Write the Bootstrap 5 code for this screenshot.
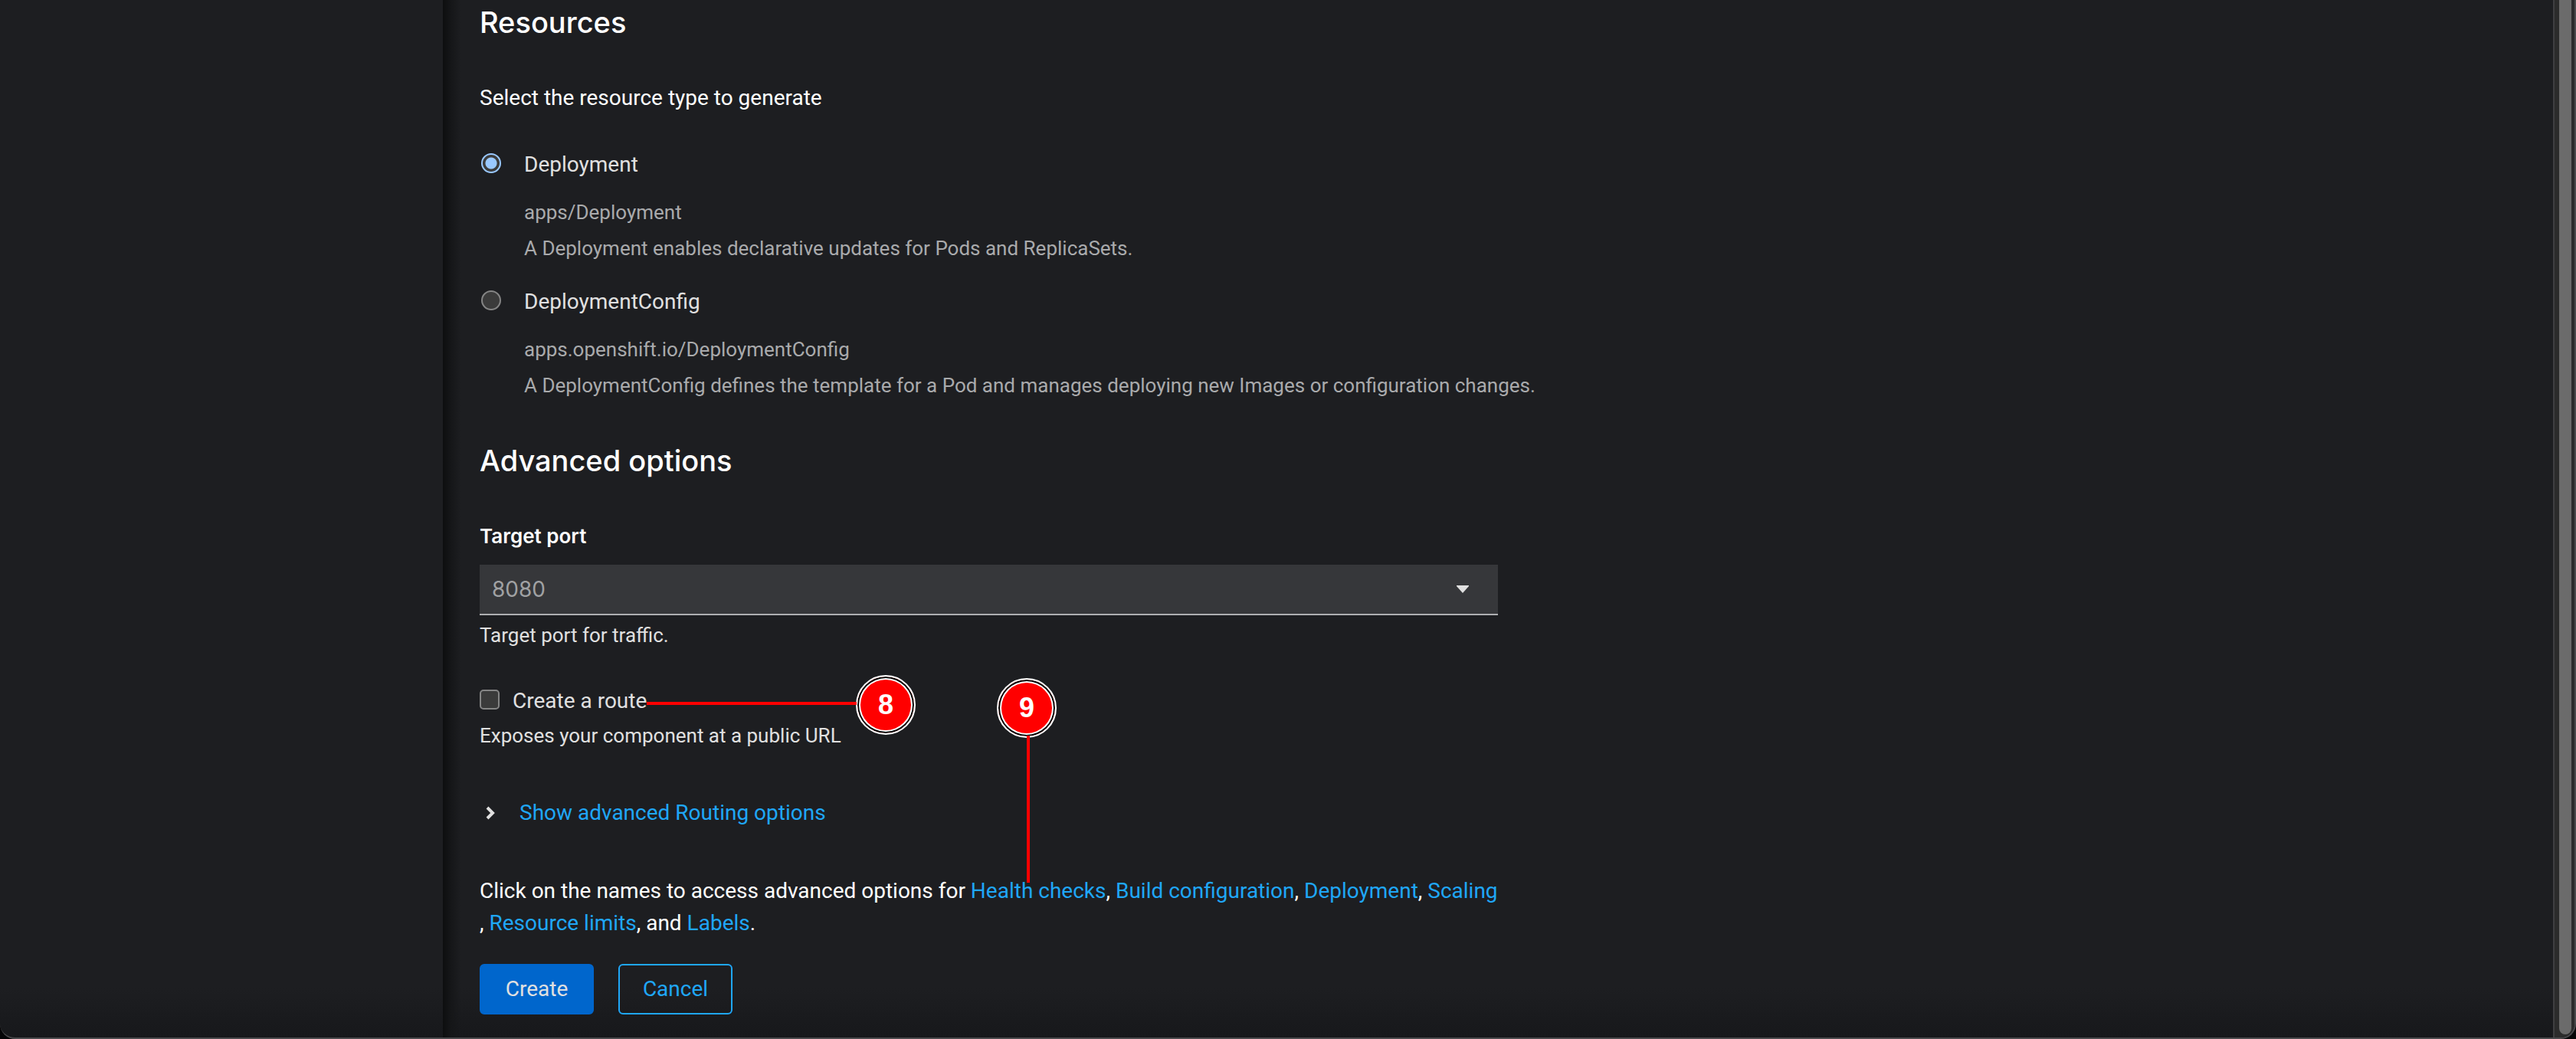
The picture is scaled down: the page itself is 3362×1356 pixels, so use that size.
<!DOCTYPE html>
<html lang="en" data-bs-theme="dark">
<head>
<meta charset="utf-8">
<meta name="viewport" content="width=device-width, initial-scale=1">
<title>Resources and advanced options</title>
<link href="https://cdn.jsdelivr.net/npm/bootstrap@5.3.0/dist/css/bootstrap.min.css" rel="stylesheet">
<style>
  :root { --page: #1d1e21; --edge: #4a4a4c; --link: #1fa7f8; --soft: #e0e0e0; --muted: #a9aaac; }
  body { background: #050507; color: #fff; font: 400 28px/42px Roboto, "Liberation Sans", sans-serif; }
  a { color: var(--link); text-decoration: none; }
  a:hover { text-decoration: underline; }
  .app-frame { background: linear-gradient(to top, #17181b, var(--page) 64px); border: solid var(--edge); border-width: 0 2px 2px 0; border-radius: 0 0 20px 20px; overflow: hidden; }
  .side-pane { width: 578px; }
  .main-pane { padding: 5px 48px 26px; background: linear-gradient(to right, #0d0e0f, #151618 10px, transparent 24px); }
  .section-title { font: 500 38px/48px Inter, sans-serif; margin: 0 0 54px; }
  .section-gap { margin-top: 50px; }
  .form-width { max-width: 1329px; }
  .lead-in { margin-bottom: 45px; }
  .choice { color: var(--soft); margin-bottom: 25px; }
  .choice .form-check-input { width: 26px; height: 26px; margin: 6px 30px 0 2px; float: none; background-color: #3b3b3b; border: 2px solid #858585; }
  .choice .form-check-input:checked { background-color: #3b3b3b; border-color: #99c8ff; background-image: radial-gradient(circle, #99c8ff 7px, transparent 8px); }
  .choice-info { margin-top: 18px; color: var(--muted); font-size: 26px; line-height: 47px; }
  .field-label { font: 600 26px/42px Inter, sans-serif; margin-bottom: 16px; }
  .port-select { height: 66px; padding: 0 80px 0 16px; font: 400 28px/64px Inter, sans-serif; color: #a0a1a3; background: #36373a url("data:image/svg+xml,%3Csvg xmlns='http://www.w3.org/2000/svg' viewBox='0 0 16 10'%3E%3Cpath d='M0 0h16v1L8 10 0 1z' fill='%23e0e0e0'/%3E%3C/svg%3E") no-repeat right 38px center / 16px 10px; border: 0; border-bottom: 2px solid #aeafb1; border-radius: 0; }
  .help { color: var(--soft); font-size: 26px; line-height: 40px; }
  .port-help { margin-top: 6px; }
  .route-row { margin-top: 45px; color: var(--soft); }
  .route-row .form-check-input { width: 26px; height: 26px; margin: 6px 17px 0 0; float: none; background-color: #3b3b3b; border: 2px solid #858585; border-radius: 5px; }
  .spaced { margin-top: 60px; }
  .expander { gap: 32px; padding-left: 8px; }
  .form-actions { margin-top: 32px; gap: 32px; }
  .form-actions .btn { height: 66px; padding: 0 28px; font-size: 28px; border-width: 2px; border-radius: 6px; min-width: 149px; }
  .btn-create { --bs-btn-bg: #06c; --bs-btn-color: #e0e0e0; --bs-btn-border-color: #06c; --bs-btn-hover-bg: #004d99; --bs-btn-hover-color: #fff; }
  .btn-cancel { --bs-btn-color: var(--link); --bs-btn-border-color: var(--link); --bs-btn-hover-color: #fff; --bs-btn-hover-border-color: #fff; }
  .scroll-track { width: 28px; background: #2c2c2c; border-left: 2px solid #3f3f41; padding: 0 4px 4px 6px; }
  .scroll-thumb { background: #6b6b6b; border-radius: 0 0 8px 8px; }
  /* numbered markers drawn over the form */
  .marker { width: 78px; height: 78px; border-radius: 50%; background: #f00; border: 2px solid #fff; box-shadow: inset 0 0 0 2px #000, inset 0 0 0 4px #fff; color: #fff; font: 700 36px/36px "Liberation Sans", sans-serif; }
  .marker-line { background: #f00; }
  .marker-route { left: 491px; top: -13px; }
  .marker-route-line { left: 218px; top: 22px; width: 274px; height: 4px; }
  .marker-health { left: 675px; top: -257px; }
  .marker-health-line { left: 714px; top: -182px; width: 4px; height: 192px; }
</style>
</head>
<body>
<div class="app-frame d-flex min-vh-100">
  <aside class="side-pane flex-shrink-0"></aside>
  <main class="main-pane flex-grow-1">
    <form>
      <h2 class="section-title">Resources</h2>
      <p class="lead-in">Select the resource type to generate</p>

      <div class="choice d-flex">
        <input class="form-check-input flex-shrink-0" type="radio" name="resource" id="res-deployment" checked>
        <div>
          <label class="d-block" for="res-deployment">Deployment</label>
          <div class="choice-info">
            <div>apps/Deployment</div>
            <div>A Deployment enables declarative updates for Pods and ReplicaSets.</div>
          </div>
        </div>
      </div>
      <div class="choice d-flex">
        <input class="form-check-input flex-shrink-0" type="radio" name="resource" id="res-config">
        <div>
          <label class="d-block" for="res-config">DeploymentConfig</label>
          <div class="choice-info">
            <div>apps.openshift.io/DeploymentConfig</div>
            <div>A DeploymentConfig defines the template for a Pod and manages deploying new Images or configuration changes.</div>
          </div>
        </div>
      </div>

      <h2 class="section-title section-gap">Advanced options</h2>
      <div class="form-width">
        <label class="field-label d-block" for="target-port">Target port</label>
        <select class="form-select port-select" id="target-port" aria-describedby="port-help">
          <option>8080</option>
        </select>
        <div class="help port-help" id="port-help">Target port for traffic.</div>

        <div class="route-row d-flex position-relative">
          <input class="form-check-input flex-shrink-0" type="checkbox" id="create-route" aria-describedby="route-help">
          <label for="create-route">Create a route</label>
          <span class="marker marker-route position-absolute d-flex align-items-center justify-content-center">8</span>
          <span class="marker-line marker-route-line position-absolute"></span>
        </div>
        <div class="help mt-1" id="route-help">Exposes your component at a public URL</div>

        <div class="expander spaced d-flex align-items-center">
          <svg width="12" height="18" viewBox="0 0 12 18" aria-hidden="true"><path d="M2 2l7 7-7 7" fill="none" stroke="#e0e0e0" stroke-width="4"/></svg>
          <a href="#routing">Show advanced Routing options</a>
        </div>

        <div class="spaced position-relative">
          Click on the names to access advanced options for <a href="#health">Health checks</a>, <a href="#build">Build configuration</a>, <a href="#deployment">Deployment</a>, <a href="#scaling">Scaling</a><br>, <a href="#limits">Resource limits</a>, and <a href="#labels">Labels</a>.
          <span class="marker marker-health position-absolute d-flex align-items-center justify-content-center">9</span>
          <span class="marker-line marker-health-line position-absolute"></span>
        </div>

        <div class="form-actions d-flex">
          <button type="submit" class="btn btn-create">Create</button>
          <button type="button" class="btn btn-cancel">Cancel</button>
        </div>
      </div>
    </form>
  </main>
  <div class="scroll-track d-flex flex-shrink-0" aria-hidden="true"><div class="scroll-thumb flex-grow-1"></div></div>
</div>
<script src="https://cdn.jsdelivr.net/npm/bootstrap@5.3.0/dist/js/bootstrap.bundle.min.js"></script>
</body>
</html>
